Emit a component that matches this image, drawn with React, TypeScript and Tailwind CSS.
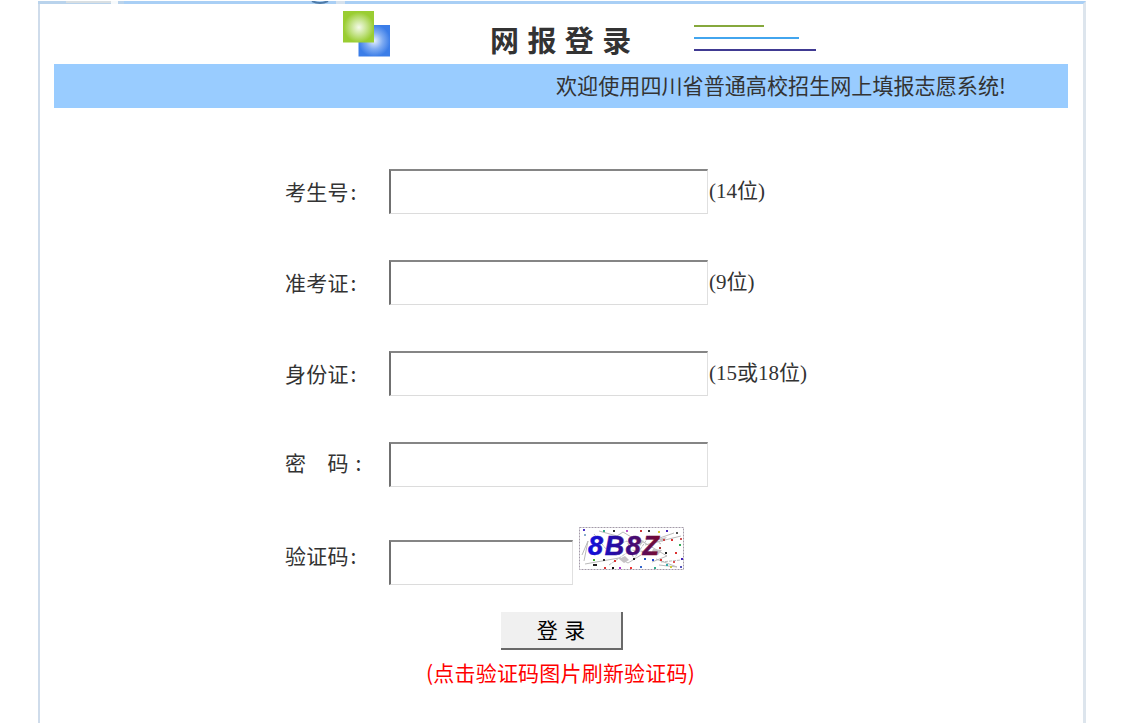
const FIELDS = [
  { id: 'candidate', label: '考生号', hint: '(14位)' },
  { id: 'ticket', label: '准考证', hint: '(9位)' },
  { id: 'identity', label: '身份证', hint: '(15或18位)' },
];

const INPUT =
  'h-[45px] shrink-0 bg-white px-2 text-[21px] outline-none border-t-2 border-l-2 border-r border-b border-t-[#858585] border-l-[#707070] border-r-[#e0e0e0] border-b-[#dcdcdc]';

const LABEL = 'w-[104px] shrink-0 text-[21px] leading-[30px] tracking-[0.2px] whitespace-pre';

// x, y, color
const DOTS: [number, number, string][] = [
  [4, 2, '#4a32c8'], [5, 7, '#8ac'], [24, 3, '#3a8'], [34, 3, '#333'], [47, 3, '#b5c'], [61, 3, '#c33'],
  [69, 3, '#333'], [79, 4, '#dc3'], [87, 3, '#42b'], [97, 5, '#555'], [92, 12, '#d33'], [101, 11, '#c55'],
  [100, 17, '#3a5'], [96, 25, '#d33'], [86, 25, '#222'], [102, 31, '#42b'], [81, 32, '#d33'], [94, 34, '#d55'],
  [73, 32, '#24c'], [65, 31, '#25b'], [54, 31, '#222'], [35, 33, '#d33'], [24, 32, '#333'], [14, 32, '#4a3'],
  [25, 40, '#d33'], [33, 40, '#111'], [40, 40, '#a3c'], [51, 40, '#e33'], [61, 39, '#36c'], [75, 40, '#3a8'],
  [87, 37, '#3aa'], [91, 39, '#cc3'], [101, 39, '#55b'], [10, 23, '#639'], [84, 12, '#c44'], [80, 20, '#a33'],
];

function Captcha() {
  return (
    <svg width="106" height="44" viewBox="0 0 106 44" className="cursor-pointer">
      <defs>
        <linearGradient id="code" x1="0" x2="1" y1="0" y2="0">
          <stop offset="0" stopColor="#1010e0" />
          <stop offset="0.45" stopColor="#2c0b96" />
          <stop offset="1" stopColor="#7c0b2c" />
        </linearGradient>
      </defs>
      <rect x="0.5" y="0.5" width="104" height="42" fill="#fff" stroke="#a39aa8" strokeDasharray="2 1" />
      <g stroke="#bbb" fill="none">
        <path d="M3 28L9 14L5 34M20 4L38 9L44 5L62 16M54 9L88 29L73 35M6 37L40 31L49 36L62 28M66 18L102 9M75 13L95 6M77 32L98 40L80 38" />
        <path d="M15 7L27 22L48 14L55 32L70 9L82 17M30 38L52 23L78 26M82 35L102 33" strokeDasharray="3 1" />
      </g>
      <g fill="#c5c2c5">
        <path d="M40 32l6-3 4 4-5 3zM74 22l9 1-4 5-7-1zM57 11l8 3-4 5zM79 12l9-2-5 5z" />
      </g>
      {DOTS.map(([x, y, color]) => (
        <rect key={`${x}-${y}`} x={x} y={y} width="2" height="2" fill={color} />
      ))}
      <rect x="14" y="37" width="4" height="2" fill="#222" />
      <text
        x="9"
        y="28"
        fill="url(#code)"
        stroke="url(#code)"
        strokeWidth="0.5"
        fontFamily="Liberation Sans, sans-serif"
        fontSize="27"
        fontWeight="700"
        fontStyle="italic"
        textLength="71"
        lengthAdjust="spacing"
      >
        8B8Z
      </text>
    </svg>
  );
}

function Logo() {
  return (
    <svg width="48" height="46" viewBox="0 0 48 46">
      <defs>
        <radialGradient id="green" cx="0.52" cy="0.52" r="0.6">
          <stop offset="0" stopColor="#f4faea" />
          <stop offset="0.45" stopColor="#c2e285" />
          <stop offset="0.8" stopColor="#9acd32" />
        </radialGradient>
        <radialGradient id="blue" cx="0.5" cy="0.5" r="0.6">
          <stop offset="0" stopColor="#e6f0fd" />
          <stop offset="0.45" stopColor="#7eabf2" />
          <stop offset="0.85" stopColor="#3b7de8" />
        </radialGradient>
      </defs>
      <rect x="15.5" y="14" width="31.5" height="31.5" fill="url(#blue)" />
      <rect x="-0.5" y="0" width="31.5" height="31.5" fill="url(#green)" />
    </svg>
  );
}

export default function App() {
  return (
    <div className="h-[723px] w-[1127px] overflow-hidden bg-white pt-px pl-[38px] font-['Noto_Sans_CJK_SC',sans-serif] text-[#333]">
      <div className="relative h-[722px] w-[1048px] border-t-[3px] border-r-[3px] border-l-2 border-t-[#a9cff5] border-r-[#dde5ed] border-l-[#cfdceb]">
        {/* Bottom edge of the site banner */}
        <svg width="330" height="4" viewBox="0 0 330 4" className="absolute -top-[3px] -left-[2px]">
          <rect width="86" height="3" fill="#b9d3ec" />
          <rect x="28" width="46" height="2" fill="#d9dfe2" />
          <rect x="73" width="7" height="3" fill="#f7fafc" />
          <path d="M274 0Q282 4 290 0" fill="none" stroke="#4e7ba8" strokeWidth="2" />
          <rect x="298" width="9" height="3" fill="#d5e1ed" />
        </svg>

        <header className="flex h-[60px] pl-[303px]">
          <div className="pt-[7px]">
            <Logo />
          </div>
          <h1 className="ml-[99px] w-[205px] pt-[15px] text-[29px] leading-[40px] font-bold tracking-[8.4px] whitespace-nowrap">
            网报登录
          </h1>
          <div className="-ml-px flex flex-col gap-[10px] pt-[21px]">
            <div className="h-[2px] w-[70px] bg-[#86a83c]" />
            <div className="h-[2px] w-[105px] bg-[#42a5ee]" />
            <div className="h-[2px] w-[122px] bg-[#403a92]" />
          </div>
        </header>

        <div className="ml-[14px] flex h-[44px] w-[1014px] items-center bg-[#99ccff] pl-[502px] text-[21.1px] whitespace-nowrap">
          欢迎使用四川省普通高校招生网上填报志愿系统!
        </div>

        <form className="pt-[61px] pl-[245px]" onSubmit={(e) => e.preventDefault()}>
          <div className="flex flex-col gap-[46px]">
            {FIELDS.map((field) => (
              <div key={field.id} className="flex h-[45px] items-center">
                <label htmlFor={field.id} className={`${LABEL} pb-[2px]`}>
                  {field.label}
                  <span className="pl-[2px]">:</span>
                </label>
                <input id={field.id} className={`${INPUT} w-[319px]`} />
                <span className="pb-px pl-px font-['Liberation_Serif','Noto_Sans_CJK_SC',serif] text-[21px] leading-[30px]">
                  {field.hint}
                </span>
              </div>
            ))}
            <div className="flex h-[45px] items-center">
              <label htmlFor="password" className={`${LABEL} pb-[5px]`}>
                密　码<span className="pl-[7px]">:</span>
              </label>
              <input id="password" type="password" className={`${INPUT} w-[319px]`} />
            </div>
          </div>

          <div className="mt-[38px] flex h-[60px] items-end">
            <label htmlFor="captcha" className={`${LABEL} pb-[15px]`}>
              验证码<span className="pl-[2px]">:</span>
            </label>
            <input id="captcha" className={`${INPUT} w-[184px]`} />
            <div className="mb-[14px] ml-[6px]">
              <Captcha />
            </div>
          </div>

          <button
            type="submit"
            className="mt-[27px] ml-[216px] block h-[38px] w-[122px] border-r-2 border-b-2 border-[#696969] bg-[#f0f0f0] pb-[2px] text-[21px] leading-[34px] text-black [word-spacing:2px]"
          >
            登 录
          </button>
          <p className="mt-[7px] ml-[141px] text-[21px] leading-[30px] tracking-[0.2px] text-[#ff0000]">
            (点击验证码图片刷新验证码)
          </p>
        </form>
      </div>
    </div>
  );
}
